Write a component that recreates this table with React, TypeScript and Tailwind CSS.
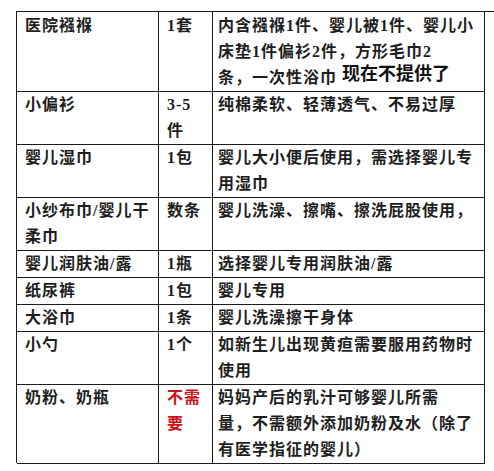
import React from 'react';

const rows: { item: React.ReactNode; qty: React.ReactNode; note: React.ReactNode }[] = [
  {
    item: '医院襁褓',
    qty: '1套',
    note: (
      <>
        内含襁褓1件、婴儿被1件、婴儿小
        <br />
        床垫1件偏衫2件，方形毛巾2
        <br />
        条，一次性浴巾
        <span className="ml-[5px] text-[18px] leading-none font-bold tracking-normal text-[#111] [font-family:'Noto_Sans_CJK_SC',sans-serif] relative -top-[3px]">
          现在不提供了
        </span>
      </>
    ),
  },
  {
    item: '小偏衫',
    qty: (
      <>
        3-5
        <br />件
      </>
    ),
    note: '纯棉柔软、轻薄透气、不易过厚',
  },
  {
    item: '婴儿湿巾',
    qty: '1包',
    note: (
      <>
        婴儿大小便后使用，需选择婴儿专
        <br />
        用湿巾
      </>
    ),
  },
  {
    item: (
      <>
        小纱布巾/婴儿干
        <br />
        柔巾
      </>
    ),
    qty: '数条',
    note: '婴儿洗澡、擦嘴、擦洗屁股使用，',
  },
  { item: '婴儿润肤油/露', qty: '1瓶', note: '选择婴儿专用润肤油/露' },
  { item: '纸尿裤', qty: '1包', note: '婴儿专用' },
  { item: '大浴巾', qty: '1条', note: '婴儿洗澡擦干身体' },
  {
    item: '小勺',
    qty: '1个',
    note: (
      <>
        如新生儿出现黄疸需要服用药物时
        <br />
        使用
      </>
    ),
  },
  {
    item: '奶粉、奶瓶',
    qty: (
      <span className="text-[#c8161d]">
        不需
        <br />要
      </span>
    ),
    note: (
      <>
        妈妈产后的乳汁可够婴儿所需
        <br />
        量，不需额外添加奶粉及水（除了
        <br />
        有医学指征的婴儿）
      </>
    ),
  },
];

export default function App() {
  return (
    <div className="w-[494px] h-[471px] bg-white pt-[11px] pl-4">
      <div className="grid grid-cols-[142px_54px_272px] border-l border-t border-[#1c1c1c] text-[16px] leading-[26px] tracking-[1px] text-[#1e1e1e] font-bold whitespace-nowrap [font-family:'Liberation_Serif','Noto_Sans_CJK_SC',serif]">
        {rows.map((r, i) => (
          <React.Fragment key={i}>
            <div className="border-r border-b border-[#1c1c1c] pl-2 pt-px -mb-px">{r.item}</div>
            <div className="border-r border-b border-[#1c1c1c] pl-2 pt-px -mb-px">{r.qty}</div>
            <div className="border-r border-b border-[#1c1c1c] pl-[5px] pt-px -mb-px">{r.note}</div>
          </React.Fragment>
        ))}
      </div>
    </div>
  );
}
